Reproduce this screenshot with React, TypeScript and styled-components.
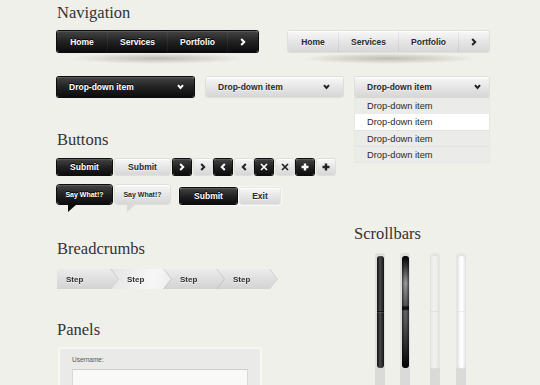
import React from "react";
import styled, { createGlobalStyle, css } from "styled-components";

const Global = createGlobalStyle`
  html, body { margin: 0; padding: 0; background: #f0f0ea; }
  body { font-family: "Liberation Sans", Arial, sans-serif; }
  * { box-sizing: border-box; }
`;

const darkFill = css`
  background: linear-gradient(#444 0%, #222 50%, #0c0c0c 100%);
  box-shadow: inset 0 1px 0 rgba(255, 255, 255, 0.12), 0 0 0 1px #0d0d0d;
  color: #fff;
  text-shadow: 0 -1px 0 #000;
`;

const lightFill = css`
  background: linear-gradient(#f8f8f8 0%, #e6e6e6 50%, #d7d7d7 100%);
  box-shadow: inset 0 1px 0 rgba(255, 255, 255, 0.8), 0 0 0 1px rgba(0, 0, 0, 0.07);
  color: #2a2a2a;
  text-shadow: 0 1px 0 rgba(255, 255, 255, 0.7);
`;

const Page = styled.div`
  width: 540px;
  height: 385px;
  overflow: hidden;
  padding: 3px 0 0 57px;
  background: #f0f0ea;
`;

const Heading = styled.h2<{ $mt?: number; $ml?: number }>`
  margin: ${(p) => p.$mt ?? 0}px 0 0 ${(p) => p.$ml ?? 0}px;
  font-family: "Liberation Serif", "Times New Roman", serif;
  font-weight: normal;
  font-size: 16.5px;
  line-height: 20px;
  height: 20px;
  color: #333;
  white-space: nowrap;
`;

/* ---------- Navigation ---------- */
const NavRow = styled.div`
  display: flex;
  gap: 30px;
  margin-top: 8px;
`;

const NavBar = styled.nav<{ $dark?: boolean }>`
  position: relative;
  display: flex;
  width: 201px;
  height: 21px;
  border-radius: 2px;
  ${(p) => (p.$dark ? darkFill : lightFill)}
  &::after {
    content: "";
    position: absolute;
    left: 6%;
    right: 6%;
    top: 100%;
    margin-top: 1px;
    height: 11px;
    background: radial-gradient(ellipse at center, rgba(70, 70, 50, 0.3) 0%, rgba(70, 70, 50, 0) 70%);
  }
`;

const NavItem = styled.div<{ $w: number; $dark?: boolean; $first?: boolean }>`
  width: ${(p) => p.$w}px;
  display: flex;
  align-items: center;
  justify-content: center;
  font-size: 8.5px;
  font-weight: bold;
  border-left: ${(p) =>
    p.$first ? "none" : p.$dark ? "1px solid rgba(255,255,255,0.05)" : "1px solid rgba(0,0,0,0.06)"};
`;

/* ---------- Dropdowns ---------- */
const DropRow = styled.div`
  display: flex;
  gap: 12px;
  margin-top: 25px;
`;

const DropWrap = styled.div`
  position: relative;
`;

const Drop = styled.div<{ $dark?: boolean; $w: number; $pr: number }>`
  width: ${(p) => p.$w}px;
  height: 20px;
  display: flex;
  align-items: center;
  justify-content: space-between;
  padding: 0 ${(p) => p.$pr}px 0 12px;
  border-radius: 2px;
  font-size: 8.5px;
  font-weight: bold;
  ${(p) => (p.$dark ? darkFill : lightFill)}
`;

const Menu = styled.ul`
  position: absolute;
  top: 21px;
  left: 0;
  width: 100%;
  margin: 0;
  padding: 0;
  list-style: none;
  background: #ebebe9;
  box-shadow: 0 0 0 1px rgba(0, 0, 0, 0.03);
`;

const MenuItem = styled.li<{ $active?: boolean }>`
  height: 16px;
  line-height: 16px;
  padding-left: 12px;
  font-size: 9.3px;
  color: #2a2a2a;
  background: ${(p) => (p.$active ? "#fff" : "transparent")};
  border-top: ${(p) => (p.$active ? "none" : "1px solid #e2e2e0")};
  &:first-child { border-top: none; }
`;

/* ---------- Layout below ---------- */
const Columns = styled.div`
  display: flex;
`;

const LeftCol = styled.div`
  width: 298px;
  display: flex;
  flex-direction: column;
`;

const RightCol = styled.div`
  flex: 1;
  display: flex;
  flex-direction: column;
`;

/* ---------- Buttons ---------- */
const BtnRow = styled.div<{ $mt: number; $h: number }>`
  display: flex;
  align-items: flex-start;
  gap: 3px;
  margin-top: ${(p) => p.$mt}px;
  height: ${(p) => p.$h}px;
`;

const Btn = styled.button<{ $dark?: boolean; $w: number }>`
  width: ${(p) => p.$w}px;
  height: 16px;
  padding: 0;
  border: none;
  border-radius: 2px;
  font-family: "Liberation Sans", Arial, sans-serif;
  font-size: 8.5px;
  font-weight: bold;
  display: flex;
  align-items: center;
  justify-content: center;
  ${(p) => (p.$dark ? darkFill : lightFill)}
`;

const IconGroup = styled.div`
  display: flex;
  gap: 2.5px;
`;

const Bubble = styled.div<{ $dark?: boolean }>`
  position: relative;
  width: 55px;
  height: 19px;
  border-radius: 3px;
  font-size: 7px;
  font-weight: bold;
  display: flex;
  align-items: center;
  justify-content: center;
  ${(p) => (p.$dark ? darkFill : lightFill)}
  &::after {
    content: "";
    position: absolute;
    left: ${(p) => (p.$dark ? 11 : 12)}px;
    top: 100%;
    width: 9px;
    height: 8px;
    background: ${(p) => (p.$dark ? "#0c0c0c" : "#d9d9d9")};
    clip-path: polygon(0 0, 100% 0, 0 100%);
  }
`;

const BtnGroup = styled.div`
  display: flex;
  gap: 3px;
  padding: 2px;
  margin: 1px 0 0 5px;
  border-radius: 3px;
  background: rgba(255, 255, 255, 0.45);
`;

/* ---------- Breadcrumbs ---------- */
const Crumbs = styled.div`
  display: flex;
  margin-top: 10px;
  height: 20px;
`;

const CrumbShadow = styled.div<{ $z: number; $first?: boolean }>`
  position: relative;
  z-index: ${(p) => p.$z};
  margin-left: ${(p) => (p.$first ? 0 : -8)}px;
  filter: drop-shadow(1px 0 0.5px rgba(0, 0, 0, 0.12));
`;

const Crumb = styled.div<{ $first?: boolean; $active?: boolean }>`
  width: 61px;
  height: 20px;
  display: flex;
  align-items: center;
  padding-left: ${(p) => (p.$first ? 9 : 17)}px;
  font-size: 8px;
  font-weight: bold;
  color: #2f2f2f;
  text-shadow: 0 1px 0 rgba(255, 255, 255, 0.7);
  background: ${(p) =>
    p.$active
      ? "linear-gradient(100deg, #e4e4e4 0%, #f7f7f7 70%, #ececec 100%)"
      : "linear-gradient(#ececec 0%, #dfdfdf 50%, #d3d3d3 100%)"};
  clip-path: ${(p) =>
    p.$first
      ? "polygon(0 0, 53px 0, 61px 50%, 53px 100%, 0 100%)"
      : "polygon(0 0, 53px 0, 61px 50%, 53px 100%, 0 100%, 8px 50%)"};
`;

/* ---------- Panels ---------- */
const Panel = styled.div`
  margin: 7px 0 0 1px;
  width: 204px;
  height: 60px;
  background: #eaeae8;
  border: 2px solid #f7f7f4;
  border-radius: 4px;
  padding: 6.5px 12px 0 12px;
`;

const Label = styled.div`
  font-size: 6.5px;
  line-height: 8px;
  color: #555;
`;

const Input = styled.div`
  margin-top: 5.5px;
  width: 176px;
  height: 26px;
  background: #f9f9f8;
  border: 1px solid #d8d8d6;
  border-top-color: #ccc;
`;

/* ---------- Scrollbars ---------- */
const Bars = styled.div`
  display: flex;
  margin-top: 9px;
`;

const Track = styled.div<{ $ml: number; $light?: boolean }>`
  margin-left: ${(p) => p.$ml}px;
  width: 10px;
  height: 140px;
  padding: 3px 1.5px 0;
  border-radius: 3px 3px 0 0;
  background: linear-gradient(
    ${(p) => (p.$light ? "#e6e6e4" : "#dededc")} 0%,
    ${(p) => (p.$light ? "#e6e6e4" : "#dededc")} 82%,
    #dadad8 82%,
    #dadad8 100%
  );
`;

type ThumbKind = "dark" | "glow" | "light" | "white";

const thumbStyles: Record<ThumbKind, ReturnType<typeof css>> = {
  dark: css`
    background: linear-gradient(
        180deg,
        transparent 0%,
        transparent 49%,
        rgba(0, 0, 0, 0.6) 49%,
        rgba(0, 0, 0, 0.6) 50%,
        rgba(255, 255, 255, 0.12) 50%,
        rgba(255, 255, 255, 0.12) 51%,
        transparent 51%
      ),
      linear-gradient(90deg, #111 0%, #4a4a4a 45%, #3a3a3a 60%, #111 100%);
  `,
  glow: css`
    background: linear-gradient(90deg, rgba(0, 0, 0, 0.55) 0%, transparent 40%, transparent 60%, rgba(0, 0, 0, 0.55) 100%),
      linear-gradient(
        180deg,
        #000 0%,
        #222 6%,
        #9a9a9a 24%,
        #555 44%,
        #111 46%,
        #111 47.5%,
        #666 49%,
        #555 60%,
        #222 85%,
        #000 100%
      );
  `,
  light: css`
    background: linear-gradient(
        180deg,
        transparent 49%,
        rgba(0, 0, 0, 0.06) 49%,
        rgba(0, 0, 0, 0.06) 50%,
        transparent 50%
      ),
      linear-gradient(90deg, #e9e9e8 0%, #f1f1f0 50%, #e9e9e8 100%);
    box-shadow: 0 0 0 1px #e0e0de;
  `,
  white: css`
    background: linear-gradient(
        180deg,
        transparent 49%,
        rgba(0, 0, 0, 0.05) 49%,
        rgba(0, 0, 0, 0.05) 50%,
        transparent 50%
      ),
      linear-gradient(90deg, #ececeb 0%, #fefefe 40%, #fefefe 60%, #ececeb 100%);
    box-shadow: 0 0 0 1px #e2e2e0;
  `,
};

const Thumb = styled.div<{ $kind: ThumbKind }>`
  width: 7px;
  height: 112px;
  border-radius: 3px;
  ${(p) => thumbStyles[p.$kind]}
`;

/* ---------- Icons ---------- */
type Dir = "right" | "left" | "down";

const Chevron = ({ dir, color }: { dir: Dir; color: string }) => {
  if (dir === "down") {
    return (
      <svg width="7" height="6" viewBox="0 0 7 6">
        <polyline points="1,1.2 3.5,4 6,1.2" fill="none" stroke={color} strokeWidth="2" />
      </svg>
    );
  }
  const pts = dir === "right" ? "1.2,1 4.2,4 1.2,7" : "4.8,1 1.8,4 4.8,7";
  return (
    <svg width="6" height="8" viewBox="0 0 6 8">
      <polyline points={pts} fill="none" stroke={color} strokeWidth="2" />
    </svg>
  );
};

const Cross = ({ color }: { color: string }) => (
  <svg width="8" height="8" viewBox="0 0 8 8">
    <path d="M1 1 L7 7 M7 1 L1 7" stroke={color} strokeWidth="1.7" />
  </svg>
);

const Plus = ({ color }: { color: string }) => (
  <svg width="8" height="8" viewBox="0 0 8 8">
    <path d="M4 0.5 V7.5 M0.5 4 H7.5" stroke={color} strokeWidth="2.4" />
  </svg>
);

const navItems = [
  { label: "Home", w: 50 },
  { label: "Services", w: 60 },
  { label: "Portfolio", w: 60 },
];

const Nav = ({ dark }: { dark?: boolean }) => (
  <NavBar $dark={dark}>
    {navItems.map((n, i) => (
      <NavItem key={n.label} $w={n.w} $dark={dark} $first={i === 0}>
        {n.label}
      </NavItem>
    ))}
    <NavItem $w={31} $dark={dark}>
      <Chevron dir="right" color={dark ? "#fff" : "#222"} />
    </NavItem>
  </NavBar>
);

const iconButtons: { kind: "right" | "left" | "x" | "plus" }[] = [
  { kind: "right" },
  { kind: "left" },
  { kind: "x" },
  { kind: "plus" },
];

const renderIcon = (kind: string, color: string) => {
  if (kind === "x") return <Cross color={color} />;
  if (kind === "plus") return <Plus color={color} />;
  return <Chevron dir={kind as Dir} color={color} />;
};

export default function App() {
  return (
    <>
      <Global />
      <Page>
        <Heading>Navigation</Heading>
        <NavRow>
          <Nav dark />
          <Nav />
        </NavRow>

        <DropRow>
          <Drop $dark $w={137} $pr={10}>
            Drop-down item
            <Chevron dir="down" color="#fff" />
          </Drop>
          <Drop $w={137} $pr={13}>
            Drop-down item
            <Chevron dir="down" color="#222" />
          </Drop>
          <DropWrap>
            <Drop $w={134} $pr={8}>
              Drop-down item
              <Chevron dir="down" color="#222" />
            </Drop>
            <Menu>
              <MenuItem>Drop-down item</MenuItem>
              <MenuItem $active>Drop-down item</MenuItem>
              <MenuItem>Drop-down item</MenuItem>
              <MenuItem>Drop-down item</MenuItem>
            </Menu>
          </DropWrap>
        </DropRow>

        <Columns>
          <LeftCol>
            <Heading $mt={32.5}>Buttons</Heading>
            <BtnRow $mt={9.5} $h={16}>
              <Btn $dark $w={55}>Submit</Btn>
              <Btn $w={55}>Submit</Btn>
              <IconGroup>
                {iconButtons.map((b) => (
                  <React.Fragment key={b.kind}>
                    <Btn $dark $w={18}>{renderIcon(b.kind, "#fff")}</Btn>
                    <Btn $w={18}>{renderIcon(b.kind, "#222")}</Btn>
                  </React.Fragment>
                ))}
              </IconGroup>
            </BtnRow>
            <BtnRow $mt={10} $h={20}>
              <Bubble $dark>Say What!?</Bubble>
              <Bubble>Say What!?</Bubble>
              <BtnGroup>
                <Btn $dark $w={57}>Submit</Btn>
                <Btn $w={40}>Exit</Btn>
              </BtnGroup>
            </BtnRow>

            <Heading $mt={34}>Breadcrumbs</Heading>
            <Crumbs>
              {[0, 1, 2, 3].map((i) => (
                <CrumbShadow key={i} $z={4 - i} $first={i === 0}>
                  <Crumb $first={i === 0} $active={i === 1}>
                    Step
                  </Crumb>
                </CrumbShadow>
              ))}
            </Crumbs>

            <Heading $mt={31}>Panels</Heading>
            <Panel>
              <Label>Username:</Label>
              <Input />
            </Panel>
          </LeftCol>

          <RightCol>
            <Heading $mt={127} $ml={-1}>Scrollbars</Heading>
            <Bars>
              <Track $ml={20}>
                <Thumb $kind="dark" />
              </Track>
              <Track $ml={15}>
                <Thumb $kind="glow" />
              </Track>
              <Track $ml={19.5} $light>
                <Thumb $kind="light" />
              </Track>
              <Track $ml={16.5} $light>
                <Thumb $kind="white" />
              </Track>
            </Bars>
          </RightCol>
        </Columns>
      </Page>
    </>
  );
}
